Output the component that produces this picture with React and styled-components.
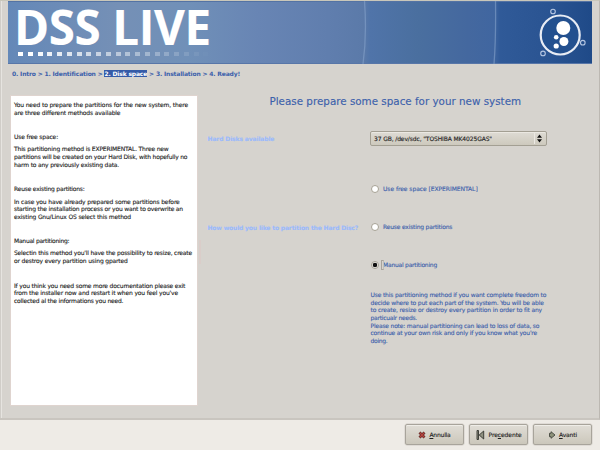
import React from "react";
import styled, { createGlobalStyle } from "styled-components";

const Global = createGlobalStyle`
  * { box-sizing: border-box; }
  body { margin: 0; background: #d6d3ce; overflow: hidden; }
`;

const Window = styled.div`
  width: 600px;
  height: 450px;
  display: flex;
  flex-direction: column;
  font-family: "DejaVu Sans", sans-serif;
  font-size: 6px;
  line-height: 7.65px;
  color: #3b60ab;
  background: #eeebe6;
  -webkit-text-stroke: 0.12px currentColor;
`;

const Page = styled.main`
  height: 420px;
  padding: 0 0 0 7px;
  background: #d6d3ce;
  border-top: 1px solid #c9c7ba;
  border-bottom: 2px solid #c9c5bf;
  border-right: 1px solid #bcb8b2;
  box-shadow: inset 1px 0 #d0cdc8, inset 2px 0 #e6e4e0;
`;

const Banner = styled.header`
  width: 584px;
  height: 63px;
  margin-left: 1px;
  position: relative;
  background: linear-gradient(90deg, #6488b8 0, #7590b6 110px, #7090b8 180px, #6885b4 250px, #607eae 320px, #5b7aa9 356px, #5074a9 362px, #4a6f9f 410px, #44689f 460px, #4066a0 486px, #305a98 492px, #2a5492 540px, #1f4a88 584px);
  box-shadow: inset 0 1px #5473a4, inset 0 -1px #5876a8;
`;

const BannerArt = styled.svg`
  position: absolute;
  inset: 0;
`;

const Brand = styled.div`
  position: relative;
  padding-left: 6px;
`;

const BrandName = styled.h1`
  margin: 0;
  height: 51px;
  font: 700 47.5px/51px "Open Sans", sans-serif;
  letter-spacing: -0.4px;
  color: #fff;
  white-space: nowrap;
`;

const Dots = styled.div`
  display: flex;
  gap: 4.75px;
  padding-left: 4px;
`;

const Dot = styled.i`
  width: 5px;
  height: 4px;
  background: #fff;
  opacity: ${(p) => p.$o};
`;

const Crumbs = styled.nav`
  padding: 5.5px 0 0 5px;
  height: 31px;
  font-weight: 700;
  white-space: pre;
  letter-spacing: -0.158px;
  -webkit-text-stroke: 0;
`;

const Current = styled.span`
  color: #fff;
  background: #355ba8;
  letter-spacing: -0.158px;
`;

const Body = styled.div`
  display: flex;
`;

const Help = styled.aside`
  width: 188px;
  height: 311px;
  margin-left: 3px;
  padding: 5px 0 0 3px;
  background: #fff;
  border: 1px solid #dfd4cf;
  color: #222;
`;

const Para = styled.p`
  margin: 0;
  padding-top: ${(p) => p.$gap || 0}px;
`;

const Line = styled.span`
  display: block;
  white-space: nowrap;
  letter-spacing: ${(p) => p.$ls || 0}px;
`;

const Grip = styled.div`
  width: 2px;
  height: 24px;
  margin: 145px 0 0 1px;
  background: #dacdc9;
`;

const Form = styled.section`
  flex: 1;
  padding-left: 6px;
`;

const Title = styled.h2`
  margin: 0 0 0 62.5px;
  height: 35px;
  font-size: 10.35px;
  font-weight: 400;
  line-height: 13px;
  white-space: nowrap;
`;

const Field = styled.div`
  display: grid;
  grid-template-columns: 163px 1fr;
  align-items: center;
  height: ${(p) => p.$h}px;
  margin-bottom: ${(p) => p.$after || 0}px;
`;

const Label = styled.label`
  font-weight: 700;
  color: #9bbafc;
  padding: 1px 0 0 0.5px;
  white-space: nowrap;
  letter-spacing: ${(p) => p.$ls || 0}px;
`;

const Select = styled.div`
  width: 177px;
  height: 15px;
  display: flex;
  align-items: center;
  justify-content: space-between;
  padding: 0 2px 0 3px;
  letter-spacing: -0.121px;
  color: #222;
  background: linear-gradient(#dedbd4, #cdc9bd);
  border: 1px solid #a39f93;
  border-radius: 2px;
  box-shadow: inset 0 1px #ebe8e2;
`;

const Arrows = styled.svg`
  border-left: 1px solid #ece9e3;
`;

const Radio = styled.div`
  display: flex;
  align-items: center;
  gap: 4px;
`;

const Knob = styled.span`
  width: 8px;
  height: 8px;
  margin-left: 1px;
  border-radius: 50%;
  border: 1px solid #a6a194;
  background: ${(p) => (p.$on ? "radial-gradient(circle, #111 0 1.9px, #f0eee9 2.6px)" : "#fff")};
`;

const RadioText = styled.span`
  position: relative;
  letter-spacing: ${(p) => p.$ls || 0}px;
  white-space: nowrap;
`;

const FocusMark = styled.i`
  position: absolute;
  left: -2.5px;
  top: -1px;
  width: 3px;
  height: 10px;
  border: 1px solid #a8a49b;
  border-right-color: #c2beb6;
`;

const Note = styled.div`
  margin: 7px 0 0 163.5px;
`;

const Footer = styled.footer`
  height: 30px;
  display: flex;
  justify-content: flex-end;
  gap: 5px;
  padding: 4px 8px 0 0;
`;

const Button = styled.button`
  width: 59px;
  height: 21px;
  margin: 0;
  padding: 0;
  display: flex;
  align-items: center;
  justify-content: center;
  gap: ${(p) => p.$gap || 3}px;
  font: 6px/8px "DejaVu Sans", sans-serif;
  letter-spacing: ${(p) => p.$ls || 0}px;
  color: #222;
  background: linear-gradient(#e0ddd6, #d4d0c6 60%, #cbc7bb);
  border: 1px solid #a8a49b;
  border-radius: 2px;
  box-shadow: inset 0 1px #efede8, 0 0 0 0.5px #d0ccc5;
`;

const dots = Array.from({ length: 20 }, (_, i) => (i < 2 ? 1 : Math.max(0.02, 1 - (i - 1) * 0.055)));

const help = [
  [0, ["You need to prepare the partitions for the new system, there", -0.136], ["are three different methods available", -0.156]],
  [17, ["Use free space:", -0.166]],
  [4.5, ["This partitioning method is EXPERIMENTAL. Three new", -0.17], ["partitions will be created on your Hard Disk, with hopefully no", -0.202], ["harm to any previously existing data.", -0.193]],
  [17, ["Reuse existing partitions:", -0.216]],
  [4.5, ["In case you have already prepared some partitions before", -0.153], ["starting the installation process or you want to overwrite an", -0.186], ["existing Gnu/Linux OS select this method", -0.176]],
  [16.5, ["Manual partitioning:", -0.259]],
  [4.5, ["Selectin this method you'll have the possibility to resize, create", -0.191], ["or destroy every partition using gparted", -0.169]],
  [17, ["If you think you need some more documentation please exit", -0.176], ["from the installer now and restart it when you feel you've", -0.155], ["collected al the informations you need.", -0.212]],
];

const note = [
  ["Use this partitioning method if you want complete freedom to", -0.17],
  ["decide where to put each part of the system. You will be able", -0.175],
  ["to create, resize or destroy every partition in order to fit any", -0.154],
  ["particualr needs.", -0.255],
  ["Please note: manual partitioning can lead to loss of data, so", -0.193],
  ["continue at your own risk and only if you know what you're", -0.195],
  ["doing.", -0.3],
];

export default function App() {
  return (
    <Window>
      <Global />
      <Page>
        <Banner>
          <BannerArt width="584" height="63" viewBox="0 0 584 63">
            <g fill="none" stroke="#86a3cb" strokeWidth="1.3" opacity=".6">
              <path d="M356.500 0Q359 34 355 63" />
              <path d="M487.500 0Q488 38 486 63" />
            </g>
            <circle cx="552.200" cy="34" r="19.500" fill="#23508f" stroke="#e8ecf4" strokeWidth="2.200" />
            <g fill="#fff">
              <circle cx="555.300" cy="27" r="7" />
              <circle cx="555.900" cy="40.500" r="4.500" />
              <circle cx="548.200" cy="36.200" r="2.300" />
              <circle cx="548.200" cy="45" r="2.600" />
            </g>
            <g fill="none" stroke="#b5c6e2" strokeWidth="1.100">
              <circle cx="545" cy="10.500" r="2.300" />
              <circle cx="574.800" cy="41.700" r="2.300" />
              <circle cx="535" cy="52.400" r="2.300" />
            </g>
          </BannerArt>
          <Brand>
            <BrandName>DSS LIVE</BrandName>
            <Dots>{dots.map((o, i) => <Dot key={i} $o={o} />)}</Dots>
          </Brand>
        </Banner>
        <Crumbs>
          {"0. Intro > 1. Identification > "}
          <Current>2. Disk space</Current>
          {" > 3. Installation > 4. Ready!"}
        </Crumbs>
        <Body>
          <Help>
            {help.map(([gap, ...lines], i) => (
              <Para key={i} $gap={gap}>
                {lines.map(([t, ls]) => <Line key={t} $ls={ls}>{t}</Line>)}
              </Para>
            ))}
          </Help>
          <Grip />
          <Form>
            <Title>Please prepare some space for your new system</Title>
            <Field $h={17} $after={23}>
              <Label $ls={-0.123}>Hard Disks available</Label>
              <Select>
                <span>37 GB, /dev/sdc, "TOSHIBA MK4025GAS"</span>
                <Arrows width="10" height="11" viewBox="0 0 9 11">
                  <path d="M2 4.700L4.500 1.500 7 4.700zM2 6.300L4.500 9.500 7 6.300z" fill="#111" />
                </Arrows>
              </Select>
            </Field>
            <Field $h={38}>
              <span />
              <Radio><Knob /><RadioText $ls={-0.059}>Use free space [EXPERIMENTAL]</RadioText></Radio>
            </Field>
            <Field $h={38}>
              <Label $ls={-0.155}>How would you like to partition the Hard Disc?</Label>
              <Radio><Knob /><RadioText $ls={-0.199}>Reuse existing partitions</RadioText></Radio>
            </Field>
            <Field $h={38}>
              <span />
              <Radio><Knob $on /><RadioText $ls={-0.234}><FocusMark />Manual partitioning</RadioText></Radio>
            </Field>
            <Note>{note.map(([t, ls]) => <Line key={t} $ls={ls}>{t}</Line>)}</Note>
          </Form>
        </Body>
      </Page>
      <Footer>
        <Button $ls={-0.2}>
          <svg width="8" height="8" viewBox="0 0 8 8">
            <path d="M1.500 1.500L6.500 6.500M6.500 1.500L1.500 6.500" stroke="#5c2725" strokeWidth="2.800" />
            <path d="M1.800 1.800L6.200 6.200M6.200 1.800L1.800 6.200" stroke="#b5443f" strokeWidth="1.400" />
          </svg>
          <span><u>A</u>nnulla</span>
        </Button>
        <Button $gap={4} $ls={-0.09}>
          <svg width="9" height="10" viewBox="0 0 9 10">
            <path d="M1 .5h1.500v9H1zM7.700 1v8L3.200 5z" fill="#8f9080" stroke="#33342f" strokeWidth=".9" />
          </svg>
          <span>Pre<u>c</u>edente</span>
        </Button>
        <Button $ls={-0.135}>
          <svg width="8" height="8" viewBox="0 0 8 8">
            <path d="M1.500 2.300h1.500V.7L7 4 3 7.300V5.700H1.500z" fill="#8d927b" stroke="#44463e" strokeWidth=".9" />
          </svg>
          <span><u>A</u>vanti</span>
        </Button>
      </Footer>
    </Window>
  );
}
